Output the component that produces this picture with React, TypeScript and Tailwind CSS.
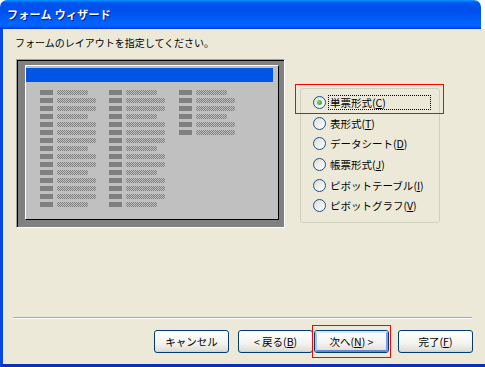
import React from 'react';

const FONT = "font-['Noto_Sans_CJK_JP','Liberation_Sans',sans-serif]";

const DITHER =
  'bg-[repeating-conic-gradient(#808080_0_25%,#c0c0c0_0_50%)] bg-[length:2px_2px]';

// short / long dithered field widths, same pattern for each column
const PATTERN = [0, 1, 1, 0, 1, 1, 1, 0, 1, 1, 0, 1, 1, 1, 0];

function FieldColumn({ rows, width }: { rows: number; width: string }) {
  return (
    <div className={`flex flex-col gap-[3px] ${width}`}>
      {PATTERN.slice(0, rows).map((long, i) => (
        <div key={i} className="flex h-[5px] items-center gap-[4px]">
          <div className="h-[5px] w-[13px] bg-[#808080]" />
          <div className={`h-[5px] ${long ? 'w-[39px]' : 'w-[31px]'} ${DITHER}`} />
        </div>
      ))}
    </div>
  );
}

function Preview() {
  return (
    <div className="h-[169px] w-[269px] border border-t-[#a0a0a0] border-l-[#a0a0a0] border-r-white border-b-white">
      <div className="h-full w-full border-t border-l border-t-black border-l-black bg-[#808080] pt-[4px] pl-[7px]">
        <div className="h-[155px] w-[254px] border border-t-white border-l-white border-r-black border-b-black bg-[#c0c0c0] pt-[2px]">
          <div className="h-[14px] w-[247px] bg-[#0055e5]" />
          <div className="mt-[8px] flex pl-[14px]">
            <FieldColumn rows={15} width="w-[69px]" />
            <FieldColumn rows={15} width="w-[70px]" />
            <FieldColumn rows={6} width="w-[70px]" />
          </div>
        </div>
      </div>
    </div>
  );
}

function Acc({ k }: { k: string }) {
  return (
    <>
      (<span className="underline underline-offset-1">{k}</span>)
    </>
  );
}

const OPTIONS: [string, string][] = [
  ['単票形式', 'C'],
  ['表形式', 'T'],
  ['データシート', 'D'],
  ['帳票形式', 'J'],
  ['ピボットテーブル', 'I'],
  ['ピボットグラフ', 'V'],
];

function Radio({ checked }: { checked?: boolean }) {
  return (
    <span className="flex h-[13px] w-[13px] shrink-0 items-center justify-center rounded-full border border-[#1c5180] bg-[linear-gradient(135deg,#dcdcd7,#ffffff)]">
      {checked && (
        <span className="h-[5px] w-[5px] rounded-full bg-[radial-gradient(circle_at_35%_35%,#7bd47b,#21a121)]" />
      )}
    </span>
  );
}

function OptionGroup() {
  return (
    <div className="relative mt-[29px] h-[135px] w-[140px] rounded-[3px] border border-[#d0d0bf] pt-[7px] pl-[12px]">
      <div className="absolute -top-[5px] -left-[6px] h-[30px] w-[149px] border border-[#ff0000]" />
      {OPTIONS.map(([label, key], i) => (
        <div key={label} className="flex h-[20.7px] items-start gap-[2px]">
          <Radio checked={i === 0} />
          <span
            className={`-mt-[1px] px-[1px] text-[10.5px] leading-[13px] text-black ${
              i === 0 ? 'w-[103px] border border-dotted border-black' : 'border border-transparent'
            }`}
          >
            {label}
            <Acc k={key} />
          </span>
        </div>
      ))}
    </div>
  );
}

function Button({ children, focused }: { children: React.ReactNode; focused?: boolean }) {
  return (
    <div className="relative">
      {focused && (
        <div className="absolute -top-[5px] -left-[2px] h-[33px] w-[79px] border border-[#ff0000]" />
      )}
      <div className="flex h-[23px] w-[75px] items-center justify-center rounded-[3px] border border-[#003c74] bg-[linear-gradient(180deg,#ffffff,#f3f2ee_60%,#e3e1d8_90%,#d6d0c5)] text-[10.5px] text-black">
        {focused ? (
          <div className="flex h-full w-full items-center justify-center rounded-[2px] border-2 border-t-[#cee7ff] border-l-[#a6c3f2] border-r-[#7a9ceb] border-b-[#6986d8]">
            {children}
          </div>
        ) : (
          children
        )}
      </div>
    </div>
  );
}

export default function App() {
  return (
    <div className={`h-[367px] w-[485px] overflow-hidden bg-white ${FONT}`}>
      <div className="flex h-[29px] w-[481px] items-center rounded-t-[7px] bg-[linear-gradient(180deg,#0997ff_0%,#0053ee_10%,#0050ee_40%,#0066ff_85%,#005bff_93%,#003dd7_97%,#003dd7_100%)] pl-[7px]">
        <span className="text-[11px] font-bold tracking-[0.3px] text-white [text-shadow:1px_1px_0_#0a1883]">
          フォーム ウィザード
        </span>
      </div>
      <div className="flex h-[338px] flex-col border-b-[3px] border-l-[3px] border-b-[#0a2fb8] border-l-[#0847e0] bg-[#ece9d8]">
        <div className="pt-[6px] pl-[12px] text-[10px] leading-[16px] text-black">
          フォームのレイアウトを指定してください。
        </div>
        <div className="mt-[8px] flex items-start pl-[13px]">
          <Preview />
          <div className="ml-[15px]">
            <OptionGroup />
          </div>
        </div>
        <div className="mx-[10px] mt-[89px] w-[459px] border-t border-b border-t-[#aca899] border-b-white" />
        <div className="mt-[11px] flex pl-[151px]">
          <Button>キャンセル</Button>
          <div className="ml-[9px] flex gap-[1px]">
            <Button>
              &lt; 戻る<Acc k="B" />
            </Button>
            <Button focused>
              次へ<Acc k="N" /> &gt;
            </Button>
          </div>
          <div className="ml-[9px]">
            <Button>
              完了<Acc k="F" />
            </Button>
          </div>
        </div>
      </div>
    </div>
  );
}
